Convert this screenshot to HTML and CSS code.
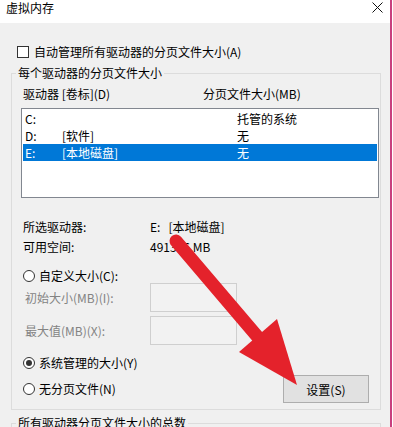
FILE: index.html
```html
<!DOCTYPE html>
<html lang="zh-CN">
<head>
    <meta charset="UTF-8">
    <meta name="viewport" content="width=device-width, initial-scale=1.0">
    <title>虚拟内存</title>

    <link rel="stylesheet" href="styles.css">
</head>
<body>
    <div class="window">
        <div class="title-bar">
            <span class="title">虚拟内存</span>
            <svg class="close" width="11" height="11" viewBox="0 0 11 11">
                <path d="M0.5 0.5L10.5 10.5M10.5 0.5L0.5 10.5" stroke="#111" stroke-width="1" fill="none"/>
            </svg>
        </div>

        <div class="content">
            <label class="check-row"><span class="checkbox"></span>自动管理所有驱动器的分页文件大小(A)</label>

            <fieldset class="group">
                <legend>每个驱动器的分页文件大小</legend>
                <div class="group-body">
                    <div class="list-head">
                        <span>驱动器 [卷标](D)</span>
                        <span>分页文件大小(MB)</span>
                    </div>

                    <div class="list-box">
                        <div class="list-row"><span>C:</span><span></span><span>托管的系统</span></div>
                        <div class="list-row"><span>D:</span><span>[软件]</span><span>无</span></div>
                        <div class="list-row selected"><span>E:</span><span>[本地磁盘]</span><span>无</span></div>
                    </div>

                    <div class="info">
                        <span>所选驱动器:</span><span>E:&nbsp;&nbsp;&nbsp;[本地磁盘]</span>
                        <span>可用空间:</span><span>491336 MB</span>
                    </div>

                    <div class="radio-row first"><span class="radio"></span>自定义大小(C):</div>

                    <div class="field-row">
                        <span class="field-label">初始大小(MB)(I):</span>
                        <span class="field"></span>
                    </div>
                    <div class="field-row second">
                        <span class="field-label">最大值(MB)(X):</span>
                        <span class="field"></span>
                    </div>

                    <div class="radio-row system"><span class="radio checked"></span>系统管理的大小(Y)</div>

                    <div class="bottom-row">
                        <div class="radio-row"><span class="radio"></span>无分页文件(N)</div>
                        <button class="set-button">设置(S)</button>
                    </div>
                </div>
            </fieldset>

            <fieldset class="group total">
                <legend>所有驱动器分页文件大小的总数</legend>
                <div class="group-body"></div>
            </fieldset>
        </div>
    </div>

    <!-- red arrow drawn over the screenshot -->
    <svg class="arrow" width="393" height="427" viewBox="0 0 393 427">
        <line x1="176" y1="241" x2="262" y2="342" stroke="#e4222b" stroke-width="13" stroke-linecap="round"/>
        <polygon points="239,352 277,319 297,385" fill="#e4222b"/>
    </svg>
</body>
</html>
```

FILE: styles.css
```css
body {
    margin: 0;
    background-color: #fff;
    font-family: "Noto Sans CJK SC", "Noto Sans", sans-serif;
    font-size: 12px;
    color: #000;
}
.window {
    width: 390px;
    height: 427px;
    border-right: 2px solid #c8407e;
    display: flex;
    flex-direction: column;
    overflow: hidden;
}
.title-bar {
    flex-shrink: 0;
    height: 23px;
    box-sizing: border-box;
    padding: 2px 7px 0 6px;
    background-color: #fff;
    display: flex;
    justify-content: space-between;
    align-items: flex-start;
}
.title {
    line-height: 12px;
}
.content {
    flex: 1;
    min-height: 0;
    overflow: hidden;
    background-color: #f0f0f0;
    padding: 22px 0 0 11px;
}
.check-row {
    display: flex;
    align-items: center;
    height: 14px;
    padding-left: 6px;
    line-height: 12px;
}
.checkbox {
    width: 12px;
    height: 12px;
    box-sizing: border-box;
    border: 1px solid #333;
    background-color: #fff;
    margin-right: 5px;
}
.group {
    width: 370px;
    box-sizing: border-box;
    margin: 8px 0 0;
    padding: 0;
    border: 1px solid #dcdcdc;
}
.group legend {
    margin-left: 4px;
    padding: 0 2px;
    line-height: 12px;
}
.group-body {
    padding: 0 1px 6px 9px;
}
.group.total {
    margin-top: 7px;
}
.list-head {
    display: grid;
    grid-template-columns: 180px 1fr;
    padding-left: 2px;
    margin-top: 9px;
    line-height: 12px;
}
.list-box {
    height: 90px;
    box-sizing: border-box;
    margin-top: 8px;
    padding: 1px;
    border: 1px solid #828790;
    background-color: #fff;
}
.list-row {
    display: grid;
    grid-template-columns: 37px 175px 1fr;
    height: 17px;
    line-height: 17px;
    padding-left: 2px;
}
.list-row.selected {
    background-color: #0078d7;
    color: #fff;
}
.info {
    display: grid;
    grid-template-columns: 127px 1fr;
    margin-top: 19px;
    padding-left: 2px;
    line-height: 20px;
}
.radio-row {
    display: flex;
    align-items: center;
    height: 14px;
    padding-left: 2px;
    line-height: 12px;
}
.radio-row.first {
    margin-top: 12px;
}
.radio-row.system {
    margin-top: 11px;
}
.radio {
    width: 12px;
    height: 12px;
    box-sizing: border-box;
    border: 1px solid #333;
    border-radius: 50%;
    background-color: #fff;
    margin-right: 4px;
    display: flex;
    justify-content: center;
    align-items: center;
}
.radio.checked::after {
    content: "";
    width: 6px;
    height: 6px;
    border-radius: 50%;
    background-color: #333;
}
.field-row {
    display: flex;
    align-items: center;
    height: 29px;
    padding-left: 4px;
}
.field-row.second {
    margin-top: 4px;
}
.field-label {
    width: 125px;
    color: #838383;
}
.field {
    width: 87px;
    height: 29px;
    box-sizing: border-box;
    border: 1px solid #cfcfcf;
    background-color: #f2f2f2;
}
.bottom-row {
    display: flex;
    justify-content: space-between;
    align-items: center;
    height: 28px;
    margin-top: 5px;
    padding-right: 10px;
}
.set-button {
    width: 86px;
    height: 28px;
    padding: 0;
    border: 1px solid #adadad;
    background-color: #e1e1e1;
    font-family: inherit;
    font-size: 12px;
    color: #000;
}
.arrow {
    position: absolute;
    top: 0;
    left: 0;
    pointer-events: none;
}
```
